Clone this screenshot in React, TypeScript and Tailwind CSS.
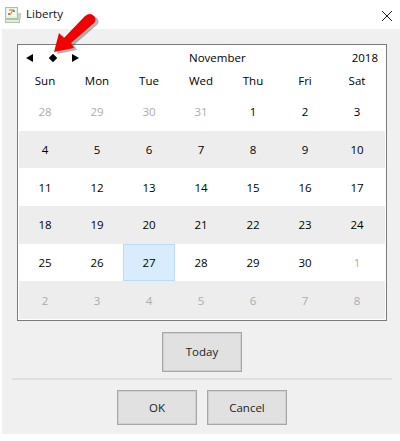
/**
 * Liberty date picker dialog with calendar grid and annotation arrow
 */

const DAY_NAMES = ['Sun', 'Mon', 'Tue', 'Wed', 'Thu', 'Fri', 'Sat'];

const WEEKS: { label: number; muted?: boolean; selected?: boolean }[][] = [
  [{ label: 28, muted: true }, { label: 29, muted: true }, { label: 30, muted: true }, { label: 31, muted: true }, { label: 1 }, { label: 2 }, { label: 3 }],
  [{ label: 4 }, { label: 5 }, { label: 6 }, { label: 7 }, { label: 8 }, { label: 9 }, { label: 10 }],
  [{ label: 11 }, { label: 12 }, { label: 13 }, { label: 14 }, { label: 15 }, { label: 16 }, { label: 17 }],
  [{ label: 18 }, { label: 19 }, { label: 20 }, { label: 21 }, { label: 22 }, { label: 23 }, { label: 24 }],
  [{ label: 25 }, { label: 26 }, { label: 27, selected: true }, { label: 28 }, { label: 29 }, { label: 30 }, { label: 1, muted: true }],
  [{ label: 2, muted: true }, { label: 3, muted: true }, { label: 4, muted: true }, { label: 5, muted: true }, { label: 6, muted: true }, { label: 7, muted: true }, { label: 8, muted: true }],
];

function AppIcon() {
  return (
    <svg width="16" height="16" viewBox="0 0 16 16" className="shrink-0">
      <rect x="0.5" y="0.5" width="12" height="11" fill="#e8f2e4" stroke="#a8c4a0" />
      <rect x="2" y="2" width="9" height="7" fill="#f7fbf5" />
      <path d="M4 3 L8 3 L5 8" stroke="#d8a03c" strokeWidth="1.4" fill="none" />
      <rect x="8" y="3" width="2" height="2" fill="#6a8fd8" />
      <rect x="3" y="6" width="2" height="2" fill="#c86a9c" />
      <rect x="13" y="6" width="3" height="6" fill="#c8d0c4" />
      <rect x="0.5" y="12.5" width="14" height="3" fill="#e2edde" stroke="#b0c8a8" />
    </svg>
  );
}

function RedArrow() {
  return (
    <svg width="54" height="50" viewBox="0 0 54 50" className="absolute left-[50px] top-[10px]">
      <path d="M4 42 L9 23 L14 28 L35 6 Q40 2 44 6 Q47 10 44 13 L21 33 L24 38 Z" fill="#444" opacity="0.4" transform="translate(3 2)" />
      <path d="M4 42 L9 23 L14 28 L35 6 Q40 2 44 6 Q47 10 44 13 L21 33 L24 38 Z" fill="#f00000" />
    </svg>
  );
}

function DialogButton({ label, className }: { label: string; className: string }) {
  return (
    <button className={`w-20 border border-[#a6a6a6] bg-[#e1e1e1] text-[#222] shadow-[inset_0_0_0_1px_#d0d0d0] ${className}`}>
      {label}
    </button>
  );
}

export default function App() {
  return (
    <div className="relative h-[441px] w-[400px] overflow-hidden bg-white font-['Open_Sans',sans-serif] text-[11.5px] text-black">
      <div className="flex h-[29px] items-center pl-[5px] pr-[8px]">
        <AppIcon />
        <span className="ml-[5px] pb-px text-[#111]">Liberty</span>
        <svg width="10" height="10" viewBox="0 0 10 10" className="ml-auto mb-[-3px]" stroke="#222" strokeWidth="1">
          <path d="M0 0 L10 10 M10 0 L0 10" />
        </svg>
      </div>

      <div className="ml-[2px] flex h-[405px] flex-col bg-[#f0f0f0] pl-[10px] pr-[8px] pt-[15px]">
        <div className="mx-[5px] flex h-[277px] flex-col border border-[#7a7a7a] bg-white p-px">
          <div className="flex h-[24px] items-center">
            <div className="flex w-[60px] items-center justify-between pl-[7px]">
              <span className="h-0 w-0 border-y-[4px] border-r-[7px] border-y-transparent border-r-black" />
              <span className="h-[6px] w-[6px] rotate-45 bg-black" />
              <span className="h-0 w-0 border-y-[4px] border-l-[7px] border-y-transparent border-l-black" />
            </div>
            <span className="ml-[110px]">November</span>
            <span className="ml-auto pr-[7px]">2018</span>
          </div>
          <div className="grid h-[23px] grid-cols-[repeat(7,52px)] items-center pb-[2px]">
            {DAY_NAMES.map((name) => (
              <span key={name} className="text-center">{name}</span>
            ))}
          </div>
          <div className="flex flex-1 flex-col">
            {WEEKS.map((week, i) => (
              <div key={i} className={`grid flex-1 grid-cols-[repeat(7,52px)] ${i % 2 === 1 ? 'bg-[#ededed]' : ''}`}>
                {week.map((day, j) => (
                  <div
                    key={j}
                    className={`flex items-center justify-center ${day.muted ? 'text-[#acacac]' : ''} ${day.selected ? 'border border-[#b9dcf9] bg-[#d9ecfd]' : ''}`}
                  >
                    {day.label}
                  </div>
                ))}
              </div>
            ))}
          </div>
        </div>

        <div className="mt-[11px] flex justify-center">
          <DialogButton label="Today" className="h-10" />
        </div>
        <div className="mt-[6px] h-[2px] bg-[#dedede]" />
        <div className="mt-[10px] flex justify-center gap-[10px]">
          <DialogButton label="OK" className="h-[35px]" />
          <DialogButton label="Cancel" className="h-[35px]" />
        </div>
      </div>

      <RedArrow />
    </div>
  );
}
